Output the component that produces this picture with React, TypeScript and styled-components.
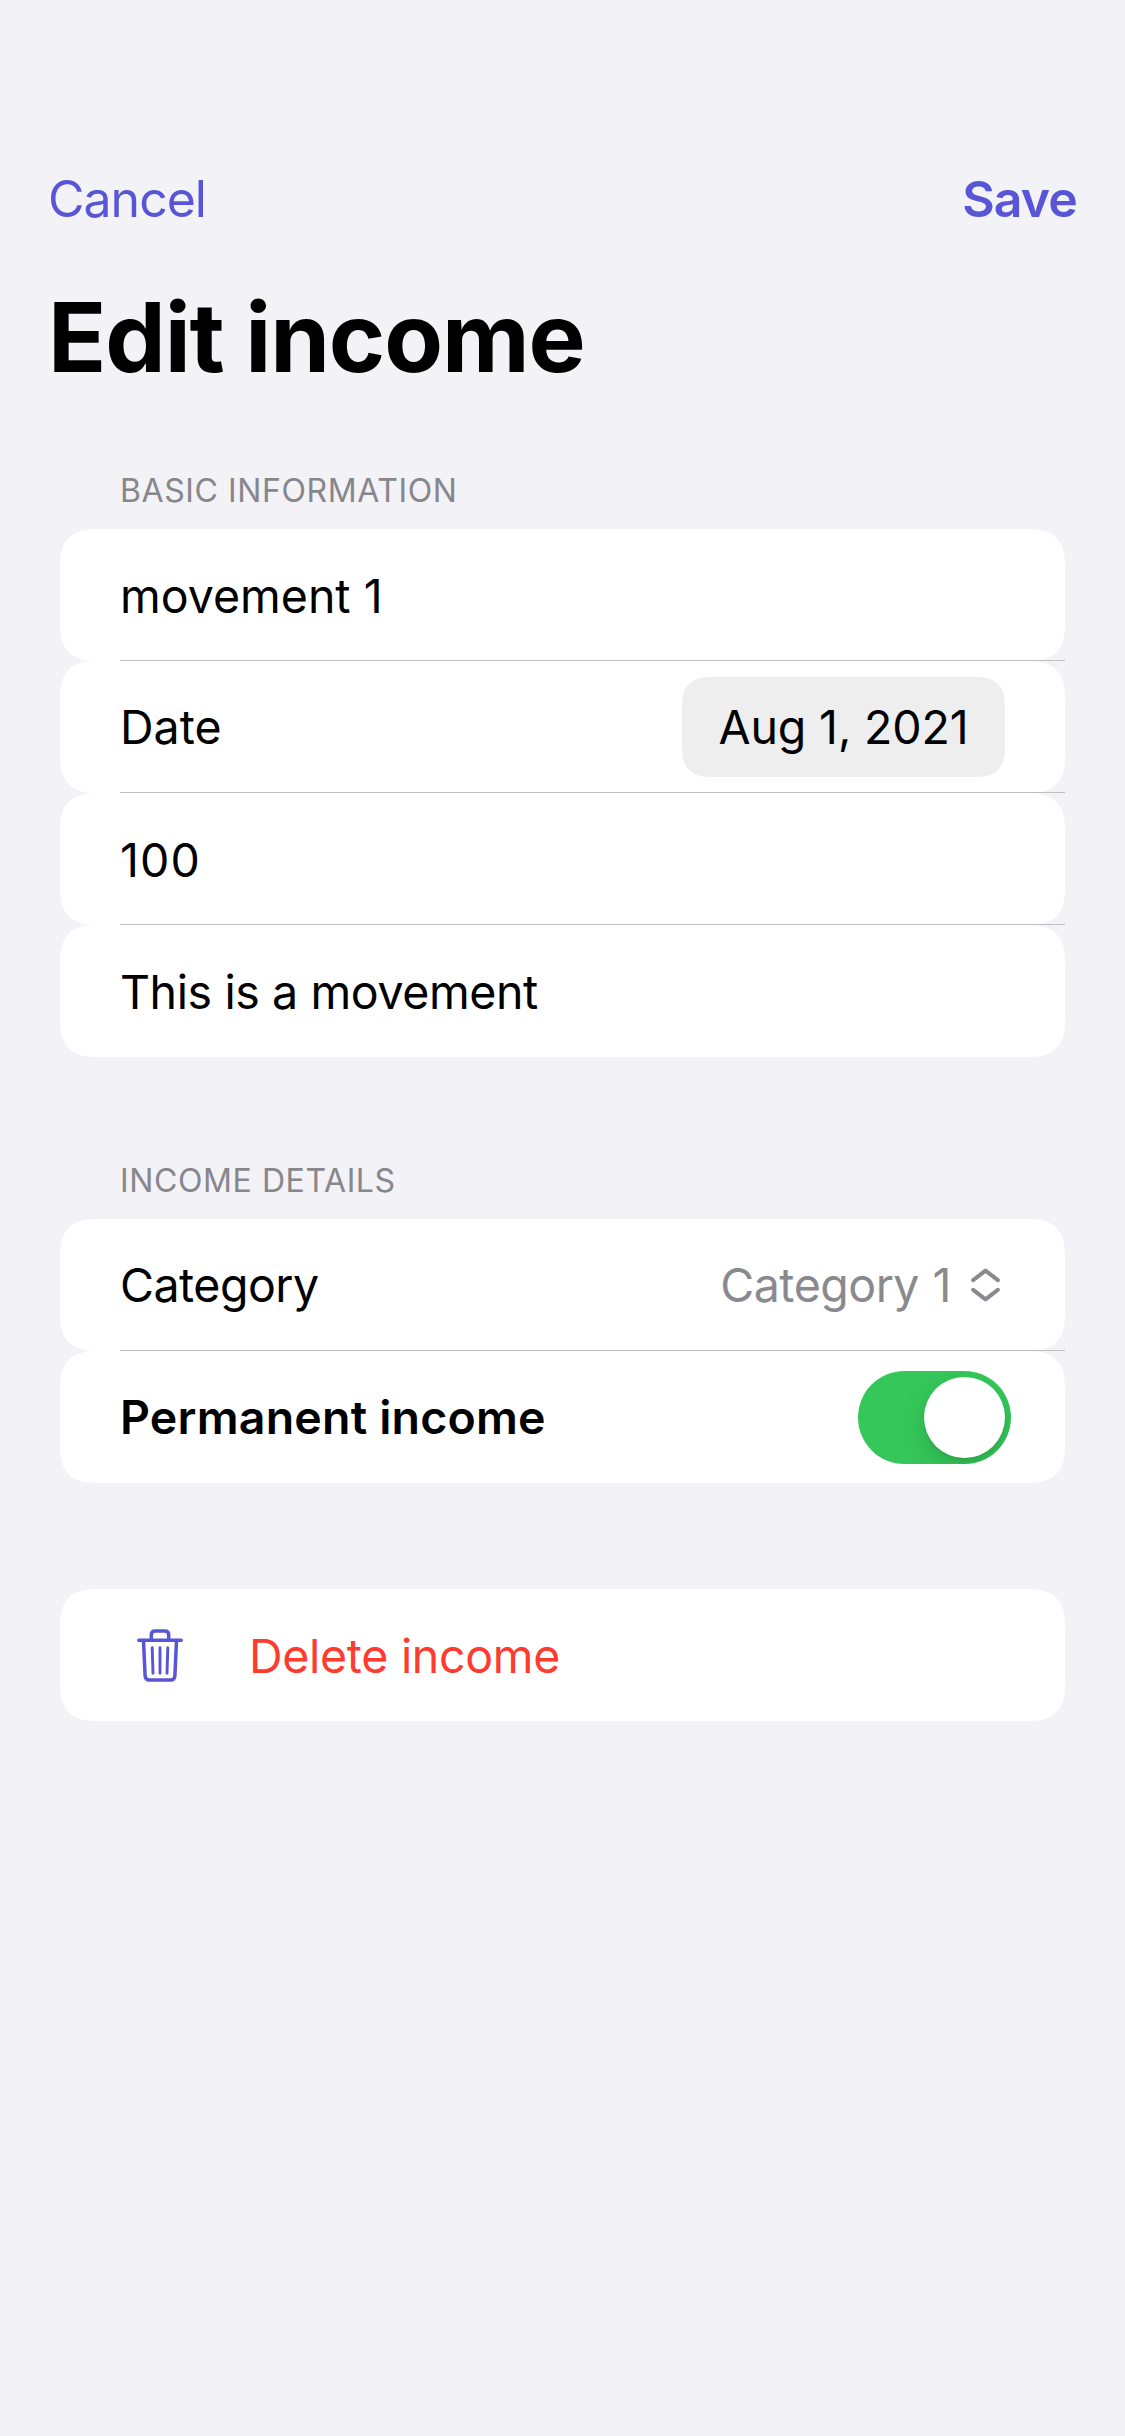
import React from "react";
import styled, { createGlobalStyle, css } from "styled-components";

const fontStack = `Inter, "Liberation Sans", sans-serif`;

const GlobalStyle = createGlobalStyle`
  *, *::before, *::after { box-sizing: border-box; }
  body { margin: 0; background: #f2f2f7; }
`;

const continuousCorner = (base: number) => css`
  border-radius: ${base}px;
  @supports (corner-shape: superellipse(1.4)) {
    border-radius: ${base * 1.27}px;
    corner-shape: superellipse(1.4);
  }
`;

const Screen = styled.main`
  display: flex;
  flex-direction: column;
  width: 1125px;
  min-height: 2436px;
  padding: 168px 48px 0;
  background: #f2f2f7;
  color: #000;
  font-family: ${fontStack};
  white-space: nowrap;
`;

const NavBar = styled.nav`
  display: flex;
  justify-content: space-between;
  height: 62px;
`;

const NavButton = styled.button<{ $strong?: boolean }>`
  padding: 0;
  border: 0;
  background: none;
  color: #5856d6;
  font: ${(p) => (p.$strong ? 600 : 400)} 50px/62px ${fontStack};
  letter-spacing: ${(p) => (p.$strong ? -0.9 : -1)}px;
`;

const Title = styled.h1`
  margin: 47px 0 0;
  font-size: 96px;
  font-weight: 700;
  line-height: 120px;
  letter-spacing: -1.1px;
`;

const Section = styled.section<{ $gap: number }>`
  display: flex;
  flex-direction: column;
  margin: ${(p) => p.$gap}px 12px 0;
`;

const SectionTitle = styled.h2`
  height: 40px;
  margin: 0 60px 18px;
  color: #87868b;
  font-size: 32px;
  font-weight: 400;
  line-height: 40px;
  letter-spacing: 0.6px;
`;

const Row = styled.div`
  position: relative;
  display: flex;
  align-items: center;
  justify-content: space-between;
  height: 132px;
  padding: 0 60px;
  background: #fff;
  ${continuousCorner(30)}
  &:not(:last-child)::after {
    content: "";
    position: absolute;
    left: 60px;
    right: 0;
    bottom: 0;
    height: 1px;
    background: #c0c0c3;
  }
`;

const Label = styled.span<{ $strong?: boolean; $tracking?: number; $wordGap?: number }>`
  font-size: 46.5px;
  font-weight: ${(p) => (p.$strong ? 600 : 400)};
  line-height: 60px;
  letter-spacing: ${(p) => p.$tracking ?? 0}px;
  word-spacing: ${(p) => p.$wordGap ?? 0}px;
`;

const FieldValue = styled(Label)`
  padding-top: 1px;
`;

const DateChip = styled.button`
  width: 323px;
  height: 100px;
  padding: 0;
  border: 0;
  background: #eeeeef;
  color: #000;
  font: 400 46.5px/100px ${fontStack};
  letter-spacing: -0.15px;
  ${continuousCorner(24)}
`;

const Picker = styled.div`
  display: flex;
  align-items: center;
  gap: 20px;
  padding-right: 5px;
  color: #8a8a8e;
`;

const Toggle = styled.div`
  display: flex;
  justify-content: flex-end;
  width: 153px;
  height: 93px;
  margin-right: -6px;
  padding: 6px;
  border-radius: 47px;
  background: #35c759;
  overflow: hidden;
`;

const Knob = styled.div`
  width: 81px;
  height: 81px;
  border-radius: 50%;
  background: #fff;
  box-shadow: 0 9px 24px rgba(0, 0, 0, 0.15), 0 3px 3px rgba(0, 0, 0, 0.06);
`;

const DeleteRow = styled(Row)`
  justify-content: flex-start;
  gap: 66px;
  padding-left: 77px;
  color: #ff3b30;
`;

const Chevrons = () => (
  <svg width="29" height="34" viewBox="0 0 29 34" fill="none" stroke="currentColor" strokeWidth="4" strokeLinecap="round" strokeLinejoin="round">
    <path d="M2.2 12.2 14.5 2.6 26.8 12.2M2.2 21.8 14.5 31.4 26.8 21.8" />
  </svg>
);

const Trash = () => (
  <svg width="46" height="53" viewBox="0 0 46 53" fill="none" stroke="#5856d6" strokeWidth="3.5" strokeLinecap="round" strokeLinejoin="round">
    <path d="M1.8 11.3H44.2M14.3 11V6Q14.3 2 18.2 2H27.8Q31.7 2 31.7 6V11" />
    <path d="M6.5 11.5 8.1 46.6Q8.3 51 12.5 51H33.5Q37.7 51 37.9 46.6L39.5 11.5" />
    <path strokeWidth="2.9" d="M15.2 18.8 16 44.3M23 18.8V44.3M30.8 18.8 30 44.3" />
  </svg>
);

export default function App() {
  return (
    <Screen>
      <GlobalStyle />
      <NavBar>
        <NavButton>Cancel</NavButton>
        <NavButton $strong>Save</NavButton>
      </NavBar>
      <Title>Edit income</Title>
      <Section $gap={74}>
        <SectionTitle>BASIC INFORMATION</SectionTitle>
        <Row><FieldValue>movement 1</FieldValue></Row>
        <Row><Label>Date</Label><DateChip>Aug 1, 2021</DateChip></Row>
        <Row><FieldValue $tracking={1.1}>100</FieldValue></Row>
        <Row><FieldValue $tracking={-0.4}>This is a movement</FieldValue></Row>
      </Section>
      <Section $gap={104}>
        <SectionTitle>INCOME DETAILS</SectionTitle>
        <Row>
          <Label $tracking={-0.5}>Category</Label>
          <Picker><Label $tracking={-0.5} $wordGap={1}>Category 1</Label><Chevrons /></Picker>
        </Row>
        <Row><Label $strong $tracking={0.2}>Permanent income</Label><Toggle><Knob /></Toggle></Row>
      </Section>
      <Section $gap={106}>
        <DeleteRow><Trash /><FieldValue $tracking={-0.3}>Delete income</FieldValue></DeleteRow>
      </Section>
    </Screen>
  );
}
